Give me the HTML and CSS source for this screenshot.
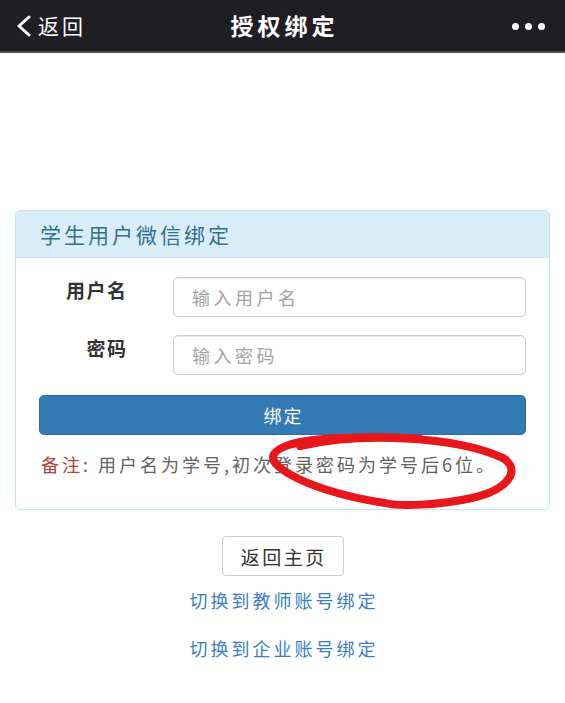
FILE: index.html
```html
<!DOCTYPE html>
<html lang="zh-CN">
<head>
<meta charset="utf-8">
<title>授权绑定</title>
<link rel="stylesheet" href="styles.css">
</head>
<body>
<header class="topbar">
  <div class="back">
    <svg class="chev" width="16" height="22" viewBox="0 0 16 22"><path d="M13 2 L3 11 L13 20" fill="none" stroke="#fff" stroke-width="3" stroke-linecap="round" stroke-linejoin="round"/></svg>
    <span>返回</span>
  </div>
  <div class="title">授权绑定</div>
  <div class="more"><i></i><i></i><i></i></div>
</header>
<main class="page">
  <section class="panel">
    <div class="panel-heading">学生用户微信绑定</div>
    <form class="panel-body">
      <div class="row">
        <label class="lbl">用户名</label>
        <input class="field" type="text" placeholder="输入用户名">
      </div>
      <div class="row">
        <label class="lbl">密码</label>
        <input class="field" type="password" placeholder="输入密码">
      </div>
      <button type="button" class="btn-primary">绑定</button>
      <p class="note"><span class="note-label">备注:</span> 用户名为学号,初次登录密码为学号后6位。</p>
    </form>
  </section>
  <div class="actions">
    <button type="button" class="btn-default">返回主页</button>
    <a class="link" href="#">切换到教师账号绑定</a>
    <a class="link" href="#">切换到企业账号绑定</a>
  </div>
</main>
<svg class="scribble" width="565" height="703" viewBox="0 0 565 703">
  <path d="M300 446 C 360 432, 455 436, 503 458 C 522 470, 508 490, 472 498 C 440 505, 400 507, 385 503 C 350 498, 300 485, 278 466 C 262 452, 285 440, 340 438 C 370 437, 400 437, 420 439" fill="none" stroke="#e8171b" stroke-width="8" stroke-linecap="round" stroke-linejoin="round"/>
</svg>
</body>
</html>
```

FILE: styles.css
```css
* { box-sizing: border-box; }
html, body { margin: 0; padding: 0; }
body {
  background: #fff;
  font-family: "Noto Sans CJK SC", "Noto Sans", sans-serif;
  color: #333;
  width: 565px;
  height: 703px;
  position: relative;
  overflow: hidden;
}

.topbar {
  height: 53px;
  background: #1f1e23;
  border-bottom: 2px solid #4e4e50;
  display: grid;
  grid-template-columns: 1fr auto 1fr;
  align-items: center;
  color: #fff;
}
.back {
  display: flex;
  align-items: center;
  padding-left: 16px;
  gap: 6px;
  font-size: 21px;
  letter-spacing: 3px;
  line-height: 1;
}
.chev { display: block; margin-top: 1px; }
.title {
  font-size: 23px;
  font-weight: 700;
  letter-spacing: 4px;
  margin-right: -4px;
  line-height: 1;
}
.more {
  justify-self: end;
  display: flex;
  gap: 6px;
  padding-right: 20px;
  padding-top: 1px;
}
.more i {
  display: block;
  width: 7px;
  height: 7px;
  border-radius: 50%;
  background: #fff;
}

.page {
  padding: 0 15px;
}
.panel {
  margin-top: 157px;
  border: 1px solid #bce8f1;
  border-radius: 5px;
  overflow: hidden;
}
.panel-heading {
  height: 47px;
  background: #d9edf7;
  border-bottom: 1px solid #bce8f1;
  color: #31708f;
  font-size: 21px;
  letter-spacing: 3px;
  padding-left: 24px;
  display: flex;
  align-items: center;
}
.panel-body {
  margin: 0;
  padding: 19px 23px 32px 23px;
  display: flex;
  flex-direction: column;
}
.row {
  display: grid;
  grid-template-columns: 87px 1fr;
  column-gap: 47px;
  margin-bottom: 18px;
}
.lbl {
  justify-self: end;
  font-weight: 700;
  font-size: 19px;
  letter-spacing: 1.5px;
  margin-right: -1.5px;
  line-height: 1;
  padding-top: 3px;
  color: #333;
}
.field {
  height: 40px;
  border: 1px solid #ccc;
  border-radius: 5px;
  box-shadow: inset 0 1px 1px rgba(0,0,0,.08);
  padding: 0 18px;
  font-family: inherit;
  font-size: 18px;
  letter-spacing: 3.5px;
  color: #555;
  outline: none;
}
.field::placeholder { color: #a3a3a3; }
.btn-primary {
  height: 40px;
  margin-top: 2px;
  background: #337ab7;
  border: 1px solid #2e6da4;
  border-radius: 5px;
  color: #fff;
  font-family: inherit;
  font-size: 18px;
  letter-spacing: 2px;
  padding: 0 0 0 2px;
}
.note {
  margin: 16px 0 0 2px;
  font-size: 18px;
  letter-spacing: 3px;
  line-height: 26px;
  color: #626262;
  white-space: nowrap;
}
.note-label { color: #a94442; }

.actions {
  display: flex;
  flex-direction: column;
  align-items: center;
  padding-top: 26px;
}
.btn-default {
  width: 122px;
  height: 40px;
  background: #fff;
  border: 1px solid #ccc;
  border-radius: 4px;
  color: #333;
  font-family: inherit;
  font-size: 19px;
  letter-spacing: 2.5px;
  padding: 0 0 0 2.5px;
}
.link {
  color: #3a7fbf;
  text-decoration: none;
  font-size: 18px;
  letter-spacing: 3px;
  margin-right: -3px;
  line-height: 24px;
}
.actions .link:first-of-type { margin-top: 12px; }
.actions .link + .link { margin-top: 24px; }

.scribble {
  position: absolute;
  left: 0;
  top: 0;
  pointer-events: none;
}
```
